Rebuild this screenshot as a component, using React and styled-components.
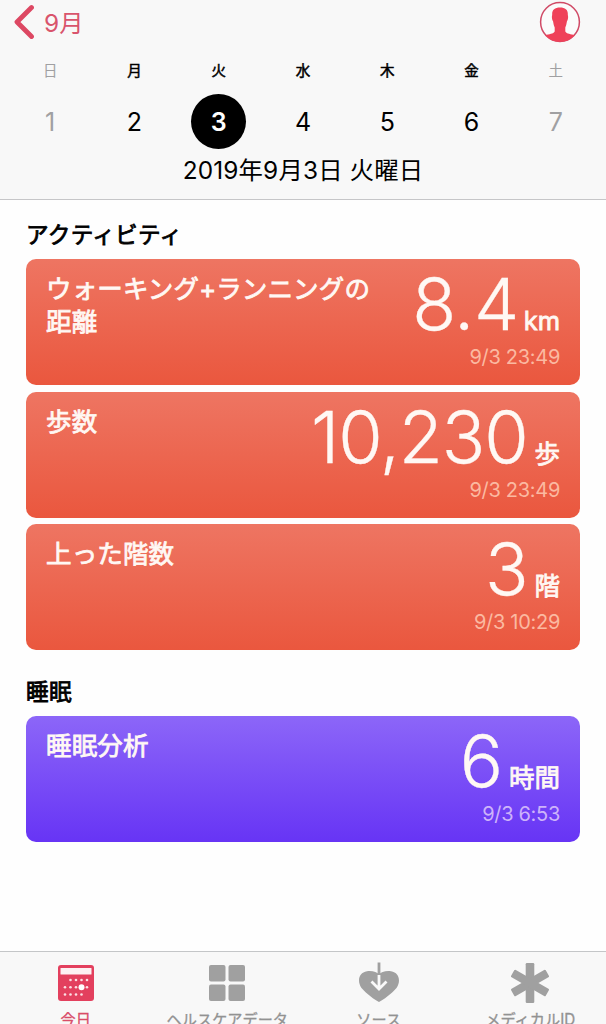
import styled, { createGlobalStyle } from "styled-components";

const days = [
  { name: "日", date: 1, weekend: true },
  { name: "月", date: 2 },
  { name: "火", date: 3, selected: true },
  { name: "水", date: 4 },
  { name: "木", date: 5 },
  { name: "金", date: 6 },
  { name: "土", date: 7, weekend: true },
];

const activities = [
  { title: "ウォーキング+ランニングの距離", value: "8.4", unit: "km", time: "9/3 23:49", gap: 5, spacing: "-0.5px" },
  { title: "歩数", value: "10,230", unit: "歩", time: "9/3 23:49" },
  { title: "上った階数", value: "3", unit: "階", time: "9/3 10:29" },
];

const sleep = [{ title: "睡眠分析", value: "6", unit: "時間", time: "9/3 6:53" }];

const CalendarIcon = () => (
  <svg width="36" height="36" viewBox="0 0 36 36">
    <rect width="36" height="36" rx="3" fill="#e3405e" />
    <rect x="2.5" y="3" width="31" height="6.5" rx="0.5" fill="#fdf1f3" />
    <g fill="#fbdfe4">
      {[12.5, 18, 23.5, 29].map((x) => (
        <circle key={x} cx={x} cy="15" r="1.3" />
      ))}
      {[7, 12.5, 18, 29].map((x) => (
        <circle key={x} cx={x} cy="22.3" r="1.3" />
      ))}
      {[7, 12.5, 18, 23.5].map((x) => (
        <circle key={x} cx={x} cy="29.5" r="1.3" />
      ))}
    </g>
    <circle cx="23.5" cy="22.3" r="3" fill="#fff" />
  </svg>
);

const GridIcon = () => (
  <svg width="36" height="36" viewBox="0 0 36 36" fill="#a0a0a0">
    <rect width="16.5" height="16.5" rx="2" />
    <rect x="19.5" width="16.5" height="16.5" rx="2" />
    <rect y="19.5" width="16.5" height="16.5" rx="2" />
    <rect x="19.5" y="19.5" width="16.5" height="16.5" rx="2" />
  </svg>
);

const SourceIcon = () => (
  <svg width="42" height="42" viewBox="0 0 42 42" fill="none">
    <path
      d="M21 40C17 38 8 31.500 3.500 26C-1 19.500 .5 10.500 9 9.200C14.500 8.500 19 10 21 12.500C23 10 27.500 8.500 33 9.200C41.500 10.500 43 19.500 38.500 26C34 31.500 25 38 21 40Z"
      fill="#a0a0a0"
    />
    <path d="M21 13V27M13.500 19.500L21 27L28.500 19.500" stroke="#f9f9f9" strokeWidth="2.800" />
    <path d="M21 0.500V13" stroke="#a0a0a0" strokeWidth="2.800" />
  </svg>
);

const MedicalIcon = () => (
  <svg width="42" height="42" viewBox="0 0 42 42" fill="#a0a0a0">
    {[0, 60, 120].map((angle) => (
      <rect key={angle} x="16.7" y="1" width="8.6" height="40" rx="1.2" transform={`rotate(${angle} 21 21)`} />
    ))}
  </svg>
);

const tabs = [
  { label: "今日", icon: <CalendarIcon />, active: true },
  { label: "ヘルスケアデータ", icon: <GridIcon /> },
  { label: "ソース", icon: <SourceIcon /> },
  { label: "メディカルID", icon: <MedicalIcon /> },
];

const HealthCard = ({ item, sleep }) => (
  <Card $sleep={sleep}>
    <CardTitle>{item.title}</CardTitle>
    <Reading>
      <Amount $gap={item.gap}>
        <Value $spacing={item.spacing}>{item.value}</Value>
        <Unit>{item.unit}</Unit>
      </Amount>
      <Time $sleep={sleep}>{item.time}</Time>
    </Reading>
  </Card>
);

const App = () => {
  return (
    <Container>
      <GlobalStyle />
      <Header>
        <NavBar>
          <BackButton>
            <svg width="21" height="36" viewBox="0 0 21 36" fill="none">
              <path d="M18.500 3.500L4 18L18.500 32.500" stroke="#dd4863" strokeWidth="4.800" strokeLinecap="round" strokeLinejoin="round" />
            </svg>
            <span>9月</span>
          </BackButton>
          <Profile>
            <svg width="42" height="42" viewBox="0 0 42 42">
              <circle cx="21" cy="21" r="19.400" fill="#fbfbfb" stroke="#d04a66" strokeWidth="1.500" />
              <path
                d="M21 6.500C15.500 6.500 12.800 9 13.200 14C12.500 16 13.100 19 14.100 20.500C14.500 23 15 25 15.700 26.500V30.500C14.500 33 10 33 6.200 34.300A20 20 0 0 0 35.800 34.300C32 33 27.500 33 26.300 30.500V26.500C27 25 27.500 23 27.900 20.500C28.900 19 29.500 16 28.800 14C29.200 9 26.500 6.500 21 6.500Z"
                fill="#ef4159"
              />
            </svg>
          </Profile>
        </NavBar>
        <Week>
          {days.map((day) => (
            <Day key={day.date} $weekend={day.weekend}>
              <DayName $weekend={day.weekend}>{day.name}</DayName>
              <DayNumber $selected={day.selected}>{day.date}</DayNumber>
            </Day>
          ))}
        </Week>
        <FullDate>2019年9月3日 火曜日</FullDate>
      </Header>
      <Content>
        <Section>
          <Heading>アクティビティ</Heading>
          <CardList>
            {activities.map((item) => (
              <HealthCard key={item.title} item={item} />
            ))}
          </CardList>
        </Section>
        <Section>
          <Heading>睡眠</Heading>
          <CardList>
            {sleep.map((item) => (
              <HealthCard key={item.title} item={item} sleep />
            ))}
          </CardList>
        </Section>
      </Content>
      <TabBar>
        {tabs.map((tab) => (
          <Tab key={tab.label} $active={tab.active}>
            <TabIcon>{tab.icon}</TabIcon>
            <span>{tab.label}</span>
          </Tab>
        ))}
      </TabBar>
    </Container>
  );
};

const GlobalStyle = createGlobalStyle`
  * {
    box-sizing: border-box;
  }
  body {
    margin: 0;
    font-family: Inter, "Noto Sans CJK JP", sans-serif;
    overflow: hidden;
  }
`;

const Container = styled.div`
  display: flex;
  flex-direction: column;
  height: 1024px;
  overflow: hidden;
  background-color: #fefefe;
`;

const Header = styled.header`
  height: 200px;
  flex-shrink: 0;
  background-color: #f8f8f8;
  border-bottom: 1px solid #c6c6c8;
`;

const NavBar = styled.div`
  display: flex;
  align-items: center;
  justify-content: space-between;
  height: 44px;
  padding: 0 25px 0 13px;
`;

const BackButton = styled.a`
  display: flex;
  align-items: center;
  gap: 10px;
  color: #d9546c;
  font-size: 24.4px;
  line-height: 36px;

  span {
    padding-top: 1px;
  }
`;

const Profile = styled.a`
  height: 42px;
`;

const Week = styled.div`
  display: grid;
  grid-template-columns: repeat(7, 1fr);
  padding: 0 8px;
`;

const Day = styled.div`
  display: flex;
  flex-direction: column;
  align-items: center;
  color: ${(props) => (props.$weekend ? "#a0a0a2" : "#000")};
`;

const DayName = styled.div`
  height: 49.5px;
  padding-top: 17px;
  font-size: 14.5px;
  line-height: 20px;
  -webkit-text-stroke: ${(props) => (props.$weekend ? "0" : "0.5px")};
`;

const DayNumber = styled.div`
  display: flex;
  align-items: center;
  justify-content: center;
  width: 55px;
  height: 55px;
  padding-top: 1px;
  border-radius: 50%;
  font-size: 25px;
  font-weight: ${(props) => (props.$selected ? 600 : 400)};
  color: ${(props) => (props.$selected ? "#fff" : "inherit")};
  background-color: ${(props) => (props.$selected ? "#000" : "transparent")};
`;

const FullDate = styled.div`
  margin-top: 3px;
  text-align: center;
  font-size: 24.4px;
  letter-spacing: 0.15px;
  line-height: 36px;
`;

const Content = styled.main`
  flex: 1;
  min-height: 0;
  padding: 19px 26px 0;
`;

const Section = styled.section`
  margin-bottom: 26px;
`;

const Heading = styled.h2`
  margin: 0;
  height: 40px;
  padding-top: 1px;
  font-size: 22.6px;
  line-height: 30px;
  font-weight: 400;
  letter-spacing: 0.3px;
  -webkit-text-stroke: 0.8px;
  color: #000;
`;

const CardList = styled.div`
  display: flex;
  flex-direction: column;
  gap: 6.5px;
`;

const Card = styled.article`
  display: flex;
  justify-content: space-between;
  height: 126px;
  padding: 12px 20px 0;
  border-radius: 10px;
  color: #fff8f4;
  background: ${(props) =>
    props.$sleep
      ? "linear-gradient(#8c66f8, #6734f5)"
      : "linear-gradient(#ee7562, #ea573e)"};
`;

const CardTitle = styled.h3`
  margin: 0;
  padding-top: 1px;
  width: 335px;
  font-size: 25.5px;
  line-height: 33px;
  font-weight: 400;
  letter-spacing: 0.15px;
  -webkit-text-stroke: 0.8px;
`;

const Reading = styled.div`
  display: flex;
  flex-direction: column;
  align-items: flex-end;
  white-space: nowrap;
  margin-left: -100px;
`;

const Amount = styled.div`
  display: flex;
  align-items: baseline;
  gap: ${(props) => props.$gap || 7}px;
  height: 74px;
`;

const Value = styled.span`
  font-size: 72px;
  line-height: 66px;
  font-weight: 300;
  letter-spacing: ${(props) => props.$spacing || "-1.2px"};
  -webkit-text-stroke: 0.3px;
`;

const Unit = styled.span`
  font-size: 25.5px;
  line-height: 30px;
  font-weight: 400;
  -webkit-text-stroke: 0.8px;
`;

const Time = styled.span`
  font-size: 20px;
  line-height: 25px;
  letter-spacing: -0.3px;
  color: ${(props) => (props.$sleep ? "#cdb3fa" : "#fbb9a1")};
`;

const TabBar = styled.nav`
  display: grid;
  grid-template-columns: repeat(4, 1fr);
  height: 73px;
  flex-shrink: 0;
  overflow: hidden;
  background-color: #f8f8f8;
  border-top: 1px solid #c4c6c8;
`;

const Tab = styled.a`
  display: flex;
  flex-direction: column;
  align-items: center;
  color: ${(props) => (props.$active ? "#d94c68" : "#929292")};

  span {
    font-size: 15.2px;
    line-height: 22px;
    font-weight: 400;
    -webkit-text-stroke: 0.3px;
    white-space: nowrap;
  }
`;

const TabIcon = styled.div`
  display: flex;
  align-items: center;
  height: 57px;
  flex-shrink: 0;
  padding-top: 5px;
`;

export default App;
